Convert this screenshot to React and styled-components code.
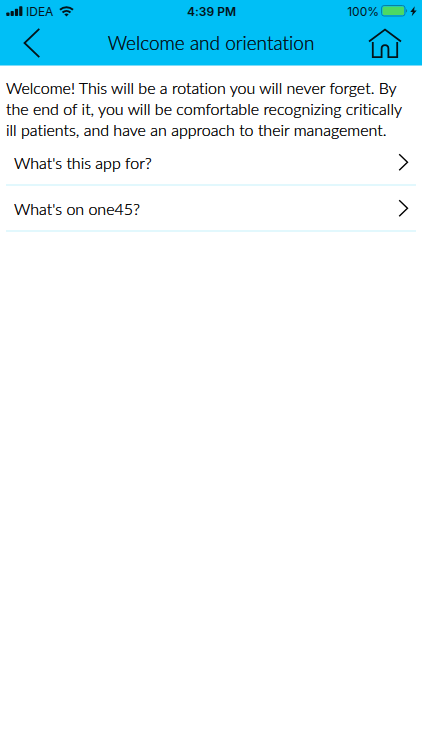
import React from 'react';
import styled, { createGlobalStyle } from 'styled-components';

const GlobalStyle = createGlobalStyle`
    * {
        box-sizing: border-box;
    }

    body {
        margin: 0;
        background-color: #fff;
        color: #000;
        font-family: Lato, "Open Sans", sans-serif;
        font-weight: 300;
        font-variant-ligatures: none;
    }
`;

const Header = styled.header`
    background-color: #00bff6;
    border-bottom: 1px solid #7fdcf8;
    color: #04141a;
`;

const StatusBar = styled.div`
    display: grid;
    grid-template-columns: 1fr auto 1fr;
    align-items: center;
    height: 22px;
    padding: 0 5px 0 6px;
    font-family: Inter, "Liberation Sans", sans-serif;
    font-size: 12px;
    font-weight: 400;
`;

const StatusGroup = styled.div`
    display: flex;
    align-items: center;
    justify-content: ${props => (props.$end ? 'flex-end' : 'flex-start')};
    gap: ${props => (props.$end ? 2 : 3)}px;
`;

const Clock = styled.time`
    font-weight: 600;
`;

const Carrier = styled.span`
    margin-right: 3px;
`;

const NavBar = styled.nav`
    display: flex;
    align-items: center;
    justify-content: space-between;
    height: 43px;
    padding: 0 20px 2px;
`;

const NavButton = styled.button`
    display: flex;
    align-items: center;
    width: 34px;
    height: 40px;
    padding: 0;
    border: 0;
    background: none;
    color: inherit;
    cursor: pointer;
`;

const BackButton = styled(NavButton)`
    padding-left: 3px;
`;

/* The zero-blur shadow gives the light weight a little more ink. */
const Title = styled.h1`
    margin: 0;
    font-size: 19px;
    font-weight: 300;
    line-height: 24px;
    text-shadow: 0 0 0 currentColor;
`;

const Content = styled.main`
    padding: 11px 6px;
    text-shadow: 0 0 0 currentColor;
`;

const Intro = styled.p`
    margin: 0;
    font-size: 16px;
    line-height: 21px;
`;

const TopicList = styled.ul`
    margin: 0;
    padding: 0;
    list-style: none;
`;

const TopicLink = styled.a`
    display: flex;
    align-items: center;
    justify-content: space-between;
    height: 46px;
    padding: 0 7px 0 8px;
    border-bottom: 2px solid #e2f8fd;
    color: inherit;
    font-size: 16px;
    text-decoration: none;
`;

const topics = [
    { id: 'app', title: "What's this app for?" },
    { id: 'one45', title: "What's on one45?" },
];

const SignalIcon = () => (
    <svg width="17" height="11" viewBox="0 0 17 11" fill="currentColor" aria-hidden="true">
        <rect x="0.3" y="6.5" width="3.2" height="3.5" rx="0.8" />
        <rect x="4.6" y="5" width="3.2" height="5" rx="0.8" />
        <rect x="8.9" y="2.8" width="3.2" height="7.2" rx="0.8" />
        <rect x="13.2" y="0.3" width="3.2" height="9.7" rx="0.8" />
    </svg>
);

const WifiIcon = () => (
    <svg width="15" height="11" viewBox="0 0 15 11" fill="none" stroke="currentColor" strokeWidth="2" aria-hidden="true">
        <path d="M1 3.8C4.7.3 10.3.3 14 3.8" />
        <path d="M3.5 6.5c2.3-2.1 5.7-2.1 8 0" />
        <path d="M7.5 10.5 5.3 8.3c1.3-1.1 3.1-1.1 4.4 0z" fill="currentColor" stroke="none" />
    </svg>
);

const BatteryIcon = () => (
    <svg width="27" height="12" viewBox="0 0 27 12" aria-hidden="true">
        <rect x="0.6" y="0.5" width="23.4" height="10.5" rx="2.5" fill="none" stroke="#087fa6" />
        <rect x="1.6" y="1.5" width="21.4" height="8.5" rx="1.5" fill="#4cd964" />
        <path d="M25 4c1.5.4 1.5 3.2 0 3.6z" fill="#087fa6" />
    </svg>
);

const BoltIcon = () => (
    <svg width="7" height="11" viewBox="0 0 7 11" fill="currentColor" aria-hidden="true">
        <path d="M4.7.3.3 6h2.5L1.7 10.3 6.7 4.5H4.1z" />
    </svg>
);

const BackIcon = () => (
    <svg width="18" height="30" viewBox="0 0 18 30" fill="none" stroke="currentColor" strokeWidth="1.8" aria-hidden="true">
        <path d="M16.3.8 1.5 15l14.8 14.2" />
    </svg>
);

const HomeIcon = () => (
    <svg width="34" height="32" viewBox="0 0 34 32" fill="none" stroke="currentColor" strokeWidth="1.8" aria-hidden="true">
        <path d="M1 14.5 17 2.6l16 11.9" />
        <path d="M4.8 15v15.2h8.8V21.8c0-5 6.8-5 6.8 0v8.4h8.8V15" />
    </svg>
);

const ChevronIcon = () => (
    <svg width="11" height="18" viewBox="0 0 11 18" fill="none" stroke="currentColor" strokeWidth="1.4" aria-hidden="true">
        <path d="M1.2 1.2 9.5 9.2l-8.3 8" />
    </svg>
);

function App() {
    return (
        <>
            <GlobalStyle />
            <Header>
                <StatusBar>
                    <StatusGroup>
                        <SignalIcon />
                        <Carrier>IDEA</Carrier>
                        <WifiIcon />
                    </StatusGroup>
                    <Clock>4:39 PM</Clock>
                    <StatusGroup $end>
                        <span>100%</span>
                        <BatteryIcon />
                        <BoltIcon />
                    </StatusGroup>
                </StatusBar>
                <NavBar>
                    <BackButton type="button" aria-label="Back">
                        <BackIcon />
                    </BackButton>
                    <Title>Welcome and orientation</Title>
                    <NavButton type="button" aria-label="Home">
                        <HomeIcon />
                    </NavButton>
                </NavBar>
            </Header>
            <Content>
                <Intro>
                    Welcome! This will be a rotation you will never forget. By the end of it, you will
                    be comfortable recognizing critically ill patients, and have an approach to their
                    management.
                </Intro>
                <TopicList>
                    {topics.map(topic => (
                        <li key={topic.id}>
                            <TopicLink href={`#${topic.id}`}>
                                {topic.title}
                                <ChevronIcon />
                            </TopicLink>
                        </li>
                    ))}
                </TopicList>
            </Content>
        </>
    );
}

export default App;
